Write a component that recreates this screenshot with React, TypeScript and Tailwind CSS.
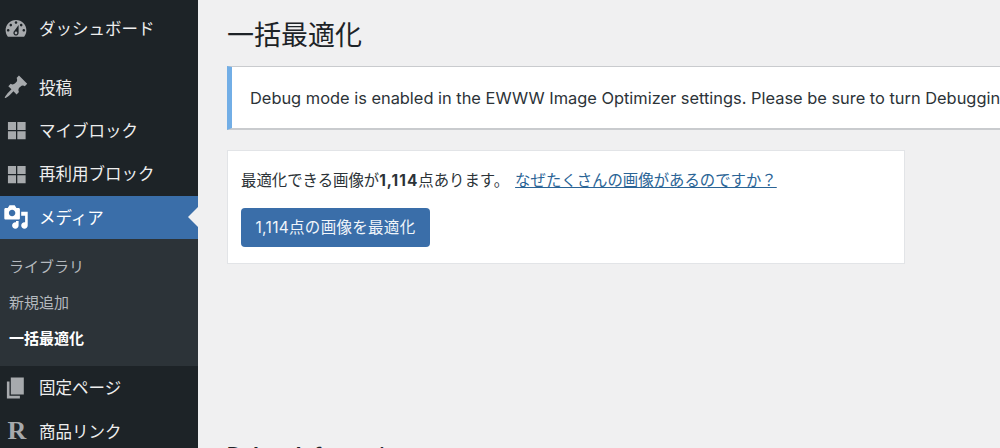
const sans = "font-['Inter','Noto_Sans_CJK_JP',sans-serif]";

const Dash = () => (
  <svg viewBox="0 0 20 20" className="w-[26px] h-[26px] fill-[#a7aaad]">
    <path fillRule="evenodd" d="M3.76 16h12.48c1.1-1.37 1.76-3.11 1.76-5 0-4.42-3.58-8-8-8s-8 3.58-8 8c0 1.89.66 3.63 1.76 5zM10 4c.55 0 1 .45 1 1s-.45 1-1 1-1-.45-1-1 .45-1 1-1zM6 6c.55 0 1 .45 1 1s-.45 1-1 1-1-.45-1-1 .45-1 1-1zm8 0c.55 0 1 .45 1 1s-.45 1-1 1-1-.45-1-1 .45-1 1-1zm-5.37 5.55L12 7v6c0 1.1-.9 2-2 2s-2-.9-2-2c0-.57.24-1.08.63-1.45zM4 10c.55 0 1 .45 1 1s-.45 1-1 1-1-.45-1-1 .45-1 1-1zm12 0c.55 0 1 .45 1 1s-.45 1-1 1-1-.45-1-1 .45-1 1-1zm-5 3c0-.55-.45-1-1-1s-1 .45-1 1 .45 1 1 1 1-.45 1-1z" />
  </svg>
);
const Pin = () => (
  <svg viewBox="0 0 20 20" className="w-[26px] h-[26px] fill-[#a7aaad]">
    <path d="M10.44 3.02l1.82-1.82 6.36 6.35-1.83 1.82c-1.05-.68-2.48-.57-3.41.36l-.75.75c-.92.93-1.04 2.35-.35 3.41l-1.83 1.82-2.41-2.41-2.8 2.79c-.42.42-3.38 2.71-3.8 2.29s1.86-3.39 2.28-3.81l2.79-2.79L4.1 9.36l1.83-1.82c1.05.69 2.48.57 3.4-.36l.75-.75c.93-.92 1.05-2.35.36-3.41z" />
  </svg>
);
const Blocks = () => (
  <svg viewBox="0 0 20 20" className="w-[26px] h-[26px] fill-[#a7aaad]">
    <path d="M3.8 3.8h6.2v6.2H3.8zM11 3.8h6.4v6.2H11zM3.8 11h6.2v6.2H3.8zM11 11h6.4v6.2H11z" />
  </svg>
);
const Media = () => (
  <svg viewBox="0 0 20 20" className="w-[26px] h-[26px] fill-white">
    <path fillRule="evenodd" d="M13 11V4c0-.55-.45-1-1-1h-1.67L9 1H5L3.67 3H2c-.55 0-1 .45-1 1v7c0 .55.45 1 1 1h10c.55 0 1-.45 1-1zM7 4.5c1.38 0 2.5 1.12 2.5 2.5S8.38 9.5 7 9.5 4.5 8.38 4.5 7 5.62 4.5 7 4.5zM14 6h5v10.5c0 1.38-1.12 2.5-2.5 2.5S14 17.88 14 16.5s1.12-2.5 2.5-2.5c.17 0 .34.02.5.05V9h-3V6zm-4 8.05V13h2v3.5c0 1.38-1.12 2.5-2.5 2.5S7 17.88 7 16.5 8.12 14 9.5 14c.17 0 .34.02.5.05z" />
  </svg>
);
const Page = () => (
  <svg viewBox="0 0 20 20" className="w-[26px] h-[26px] fill-[#a7aaad]">
    <path d="M6 15V2h10v13H6zm-1 1h8v2H3V5h2v11z" />
  </svg>
);
const RIcon = () => (
  <span className="w-[28px] text-center font-['Liberation_Serif',serif] font-bold text-[26px] leading-[26px] text-[#a7aaad]">R</span>
);

function Item({ icon, label, active }: { icon: React.ReactNode; label: string; active?: boolean }) {
  return (
    <div className={`relative shrink-0 flex items-center h-[43.4px] pl-[3px] ${active ? "bg-[#3a6ea9] text-white" : "text-[#eeeeee]"}`}>
      <div className="w-[36px] flex justify-start">{icon}</div>
      <span className="relative text-[16.5px] leading-[20px] pt-[1px]">{label}</span>
      {active && (
        <div className="absolute right-0 top-1/2 -translate-y-1/2 border-y-[10px] border-r-[10px] border-y-transparent border-r-[#f0f0f1]" />
      )}
    </div>
  );
}

export default function App() {
  return (
    <div className={`${sans} flex w-[1000px] h-[448px] overflow-hidden bg-[#f0f0f1]`}>
      <aside className="w-[198px] shrink-0 h-full bg-[#1d2327] flex flex-col pt-[7px] overflow-hidden">
        <Item icon={<Dash />} label="ダッシュボード" />
        <div className="h-[15px] shrink-0" />
        <Item icon={<Pin />} label="投稿" />
        <Item icon={<Blocks />} label="マイブロック" />
        <Item icon={<Blocks />} label="再利用ブロック" />
        <Item icon={<Media />} label="メディア" active />
        <div className="bg-[#2c3338] h-[127px] shrink-0 flex flex-col pt-[10px] pl-[9px] text-[15px]">
          <div className="h-[36px] shrink-0 flex items-center text-[#b4b9be]">ライブラリ</div>
          <div className="h-[36px] shrink-0 flex items-center text-[#b4b9be]">新規追加</div>
          <div className="h-[36px] shrink-0 flex items-center text-white font-bold">一括最適化</div>
        </div>
        <Item icon={<Page />} label="固定ページ" />
        <Item icon={<RIcon />} label="商品リンク" />
      </aside>
      <main className="flex-1 min-w-0 pl-[29px] flex flex-col">
        <h1 className="mt-[19px] h-[34px] shrink-0 text-[27px] leading-[34px] font-normal text-[#1d2327] whitespace-nowrap">一括最適化</h1>
        <div className="mt-[13px] h-[64px] w-[900px] flex items-center bg-white border-l-[5px] border-l-[#72aee6] border-t border-t-[#c9cbce] border-b-2 border-b-[#c9cbce] pl-[18px] pt-[2px] shrink-0">
          <span className="text-[16.4px] text-[#2c3338] whitespace-nowrap">Debug mode is enabled in the EWWW Image Optimizer settings. Please be sure to turn Debugging off when you are done.</span>
        </div>
        <section className="mt-[20px] w-[678px] h-[114px] bg-white border border-[#e2e4e7] pl-[13px] pt-[20px] shrink-0">
          <p className="text-[15.4px] leading-[20px] text-[#2c3338] whitespace-nowrap">
            最適化できる画像が<b className="tracking-[1px]">1,114</b>点あります。
            <a className="ml-[6px] text-[#2a6496] underline">なぜたくさんの画像があるのですか？</a>
          </p>
          <button className="mt-[17px] h-[39px] w-[189px] rounded-[4px] bg-[#3a6ea9] text-[15.5px] tracking-[0.3px] text-[#f0f5fa] flex items-center justify-center">
            1,114点の画像を最適化
          </button>
        </section>
        <h2 className="mt-[179px] shrink-0 text-[20px] leading-[24px] font-bold text-[#1d2327]">Debug Information</h2>
      </main>
    </div>
  );
}
